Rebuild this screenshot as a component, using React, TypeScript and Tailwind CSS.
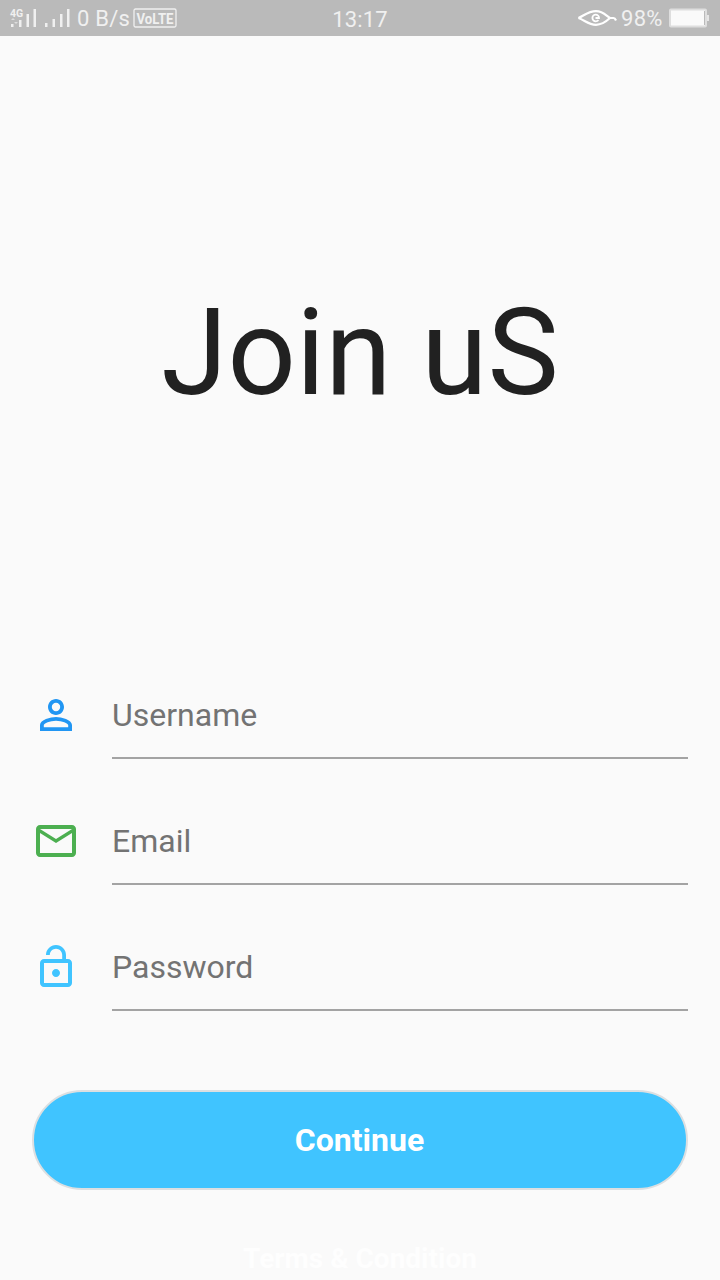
import React from "react";

const PERSON =
  "M12 5.9a2.1 2.1 0 1 1 0 4.2 2.1 2.1 0 0 1 0-4.2m0 9c2.97 0 6.1 1.46 6.1 2.1v1.1H5.9V17c0-.64 3.13-2.1 6.1-2.1M12 4C9.79 4 8 5.79 8 8s1.79 4 4 4 4-1.79 4-4-1.79-4-4-4zm0 9c-2.67 0-8 1.34-8 4v3h16v-3c0-2.66-5.33-4-8-4z";
const MAIL =
  "M20 4H4c-1.1 0-1.99.9-1.99 2L2 18c0 1.1.9 2 2 2h16c1.1 0 2-.9 2-2V6c0-1.1-.9-2-2-2zm0 14H4V8l8 5 8-5v10zm-8-7L4 6h16l-8 5z";
const LOCK_OPEN =
  "M12 17c1.1 0 2-.9 2-2s-.9-2-2-2-2 .9-2 2 .9 2 2 2zm6-9h-1V6c0-2.76-2.24-5-5-5S7 3.24 7 6h1.9c0-1.71 1.39-3.1 3.1-3.1 1.71 0 3.1 1.39 3.1 3.1v2H6c-1.1 0-2 .9-2 2v10c0 1.1.9 2 2 2h12c1.1 0 2-.9 2-2V10c0-1.1-.9-2-2-2zm0 12H6V10h12v10z";

function Field({ icon, label, tone }: { icon: string; label: string; tone: string }) {
  return (
    <label className="flex h-[126px] items-start">
      <svg viewBox="0 0 24 24" className={`mt-[26px] size-12 shrink-0 ${tone}`} fill="currentColor">
        <path d={icon} />
      </svg>
      <span className="ml-8 flex h-[94px] flex-1 items-end border-b-2 border-[#a3a3a3] pb-[23px] text-[32px] leading-[38px] text-[#737373]">
        {label}
      </span>
    </label>
  );
}

function StatusBar() {
  return (
    <header className="grid h-9 shrink-0 grid-cols-3 items-center bg-[#bababa] text-[22px] leading-9 text-[#f0f0f0]">
      <div className="flex h-9 items-center whitespace-nowrap pl-2">
        <svg width="64" height="36" viewBox="0 0 64 36" fill="currentColor" className="shrink-0">
          <text x="2" y="16.5" fontSize="10.5" fontWeight="700" fontFamily="Roboto, sans-serif">4G</text>
          <path d="M3 24h2.5v3H3zM11 20h2.5v7H11zM18.5 14h2.5v13h-2.5zM25.5 9H28v18h-2.5zM37 23h2.5v4H37zM44.5 19H47v8h-2.5zM52 14h2.5v13H52zM59 9h2.5v18H59z" />
          <path d="M3 20l2-2 2 2zM6 22h4l-2 2z" opacity=".65" />
        </svg>
        <span className="relative top-px ml-[5px] w-[53px] tracking-[0.2px]">0 B/s</span>
        <svg width="44" height="20" viewBox="0 0 44 20" className="ml-[3px] shrink-0">
          <rect x="1" y="1" width="42" height="18" rx="1.5" fill="none" stroke="currentColor" strokeWidth="1.3" />
          <text x="3.5" y="15.5" fontSize="14.5" fontWeight="700" fontFamily="Roboto, sans-serif" fill="currentColor" textLength="37" lengthAdjust="spacingAndGlyphs">VoLTE</text>
        </svg>
      </div>
      <time className="relative top-0.5 text-center tracking-[0.1px]">13:17</time>
      <div className="flex h-9 items-center justify-end pr-2.5">
        <svg width="42" height="22" viewBox="0 0 42 22" className="shrink-0" fill="none" stroke="#fff">
          <path d="M2.5 11C9 8 12.5 4.2 20 4.2c7 0 10 4.3 14 6.8h3.5q1.5 0 2.5 2.5" strokeWidth="2.2" />
          <path d="M2.5 11c6 2 10 6.8 17.5 6.8 7 0 11-4 14-6.8" strokeWidth="2.2" />
          <path d="M19.5 11h3.5a3.3 3.3 0 1 0-3.3 3.3c1.2 0 2-.4 2.8-1.2" strokeWidth="1.8" />
        </svg>
        <span className="relative top-px ml-[3px] w-[42px] tracking-[0.3px]">98%</span>
        <svg width="41" height="20" viewBox="0 0 41 20" className="ml-1.5 shrink-0">
          <rect x="1" y="1.5" width="36" height="17" rx="1" fill="#fafafa" stroke="#dedede" strokeWidth="2" />
          <path d="M35.5 3v14" stroke="#bababa" />
          <path d="M38 7h2v6h-2z" fill="#e6e6e6" />
        </svg>
      </div>
    </header>
  );
}

export default function App() {
  return (
    <main className="flex h-[1280px] w-[720px] flex-col overflow-hidden bg-[#fafafa] font-['Roboto',sans-serif]">
      <StatusBar />
      <h1 className="flex h-[629px] items-center justify-center pt-1 text-[120px] leading-[140px] font-normal text-[#212121]">
        Join uS
      </h1>
      <form className="flex flex-col px-8">
        <Field icon={PERSON} label="Username" tone="text-[#2196f3]" />
        <Field icon={MAIL} label="Email" tone="text-[#4caf50]" />
        <Field icon={LOCK_OPEN} label="Password" tone="text-[#40c4ff]" />
        <button
          type="button"
          className="mt-[47px] flex h-[100px] w-full items-center justify-center rounded-full border-2 border-[#dcdfe1] bg-[#40c4ff] pr-px text-[32px] font-bold text-white"
        >
          Continue
        </button>
      </form>
      <p className="mt-[52px] text-center text-[28px] leading-[34px] font-bold text-[#fefefe]">Terms &amp; Condition</p>
    </main>
  );
}
